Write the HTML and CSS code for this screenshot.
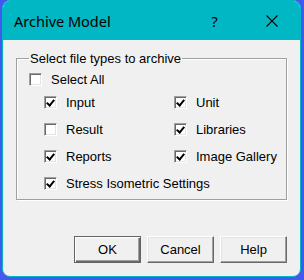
FILE: index.html
```html
<!DOCTYPE html>
<html>
<head>
<meta charset="utf-8">
<link rel="stylesheet" href="styles.css">
</head>
<body>
<div class="window">
  <div class="titlebar">
    <span class="title">Archive Model</span>
    <span class="tbtn help-q">?</span>
    <span class="tbtn close">
      <svg width="12" height="12" viewBox="0 0 12 12"><path d="M0.5 0.5 L11.5 11.5 M11.5 0.5 L0.5 11.5" stroke="#000" stroke-width="1.1" fill="none"/></svg>
    </span>
  </div>
  <div class="content">
    <fieldset class="group">
      <legend>Select file types to archive</legend>
      <div class="grid">
        <label class="item all"><span class="cb"></span>Select All</label>
        <label class="item"><span class="cb on"></span>Input</label>
        <label class="item"><span class="cb on"></span>Unit</label>
        <label class="item"><span class="cb"></span>Result</label>
        <label class="item"><span class="cb on"></span>Libraries</label>
        <label class="item"><span class="cb on"></span>Reports</label>
        <label class="item"><span class="cb on"></span>Image Gallery</label>
        <label class="item wide"><span class="cb on"></span>Stress Isometric Settings</label>
      </div>
    </fieldset>
    <div class="buttons">
      <button class="btn default">OK</button>
      <button class="btn">Cancel</button>
      <button class="btn">Help</button>
    </div>
  </div>
</div>
</body>
</html>
```
FILE: styles.css
```css
html, body {
  margin: 0;
  padding: 0;
}
body {
  background: #4259f0;
  width: 304px;
  height: 280px;
  overflow: hidden;
  font-family: "Liberation Sans", Arial, sans-serif;
  font-size: 13px;
  color: #000;
}
.window {
  margin-left: 2px;
  width: 299px;
  height: 277px;
  box-sizing: border-box;
  border: 1px solid #00b7c3;
  border-radius: 8px;
  background: #f0f0f0;
  overflow: hidden;
  display: flex;
  flex-direction: column;
}
.titlebar {
  height: 39px;
  background: #00b7c3;
  display: flex;
  align-items: center;
  flex: none;
}
.title {
  flex: 1;
  padding-left: 11px;
  font-family: "Noto Sans", "Open Sans", sans-serif;
  font-size: 14.5px;
  color: #000;
}
.tbtn {
  width: 57px;
  display: flex;
  justify-content: center;
  align-items: center;
  font-family: "Noto Sans", sans-serif;
  font-size: 15px;
}
.content {
  padding: 11px 13px 0 13px;
  flex: 1;
  display: flex;
  flex-direction: column;
}
.group {
  margin: 0;
  padding: 0 0 0 13px;
  height: 149px;
  box-sizing: border-box;
  border: 1px solid #a0a0a0;
  box-shadow: inset 1px 1px 0 #fff, 1px 1px 0 #fff;
  min-width: 0;
}
.group legend {
  padding: 0 1px;
  margin-left: -1px;
  line-height: 15px;
}
.grid {
  display: grid;
  grid-template-columns: 130px 1fr;
  grid-template-rows: 9px repeat(4, 13px);
  row-gap: 14px;
  padding-top: 7px;
  padding-left: 14px;
}
.item {
  display: flex;
  align-items: center;
  gap: 9px;
  white-space: nowrap;
  line-height: 13px;
  height: 13px;
}
.item.all {
  grid-column: 1 / 3;
  margin-left: -15px;
  align-self: start;
}
.item.wide {
  grid-column: 1 / 3;
}
.cb {
  width: 13px;
  height: 13px;
  box-sizing: border-box;
  flex: none;
  background: #fff;
  border-top: 1px solid #a0a0a0;
  border-left: 1px solid #a0a0a0;
  border-bottom: 1px solid #fff;
  border-right: 1px solid #fff;
  box-shadow: inset 1px 1px 0 #696969, inset -1px -1px 0 #e3e3e3;
  position: relative;
}
.cb.on::after {
  content: "";
  position: absolute;
  left: 2px;
  top: 1px;
  width: 3px;
  height: 6px;
  border-right: 2px solid #000;
  border-bottom: 2px solid #000;
  transform: translate(1px, 0) rotate(40deg);
}
.buttons {
  margin-top: 36px;
  display: flex;
  justify-content: flex-end;
  gap: 6px;
}
.btn {
  width: 67px;
  height: 27px;
  box-sizing: border-box;
  padding: 0;
  font-family: "Liberation Sans", Arial, sans-serif;
  font-size: 13px;
  color: #000;
  background: #f0f0f0;
  border-top: 1px solid #fff;
  border-left: 1px solid #fff;
  border-right: 1px solid #696969;
  border-bottom: 1px solid #696969;
  box-shadow: inset -1px -1px 0 #a0a0a0, inset 1px 1px 0 #e3e3e3;
}
.btn.default {
  border: 1px solid #646464;
  box-shadow: inset 1px 1px 0 #fff, inset -1px -1px 0 #696969, inset -2px -2px 0 #a0a0a0;
}
```
